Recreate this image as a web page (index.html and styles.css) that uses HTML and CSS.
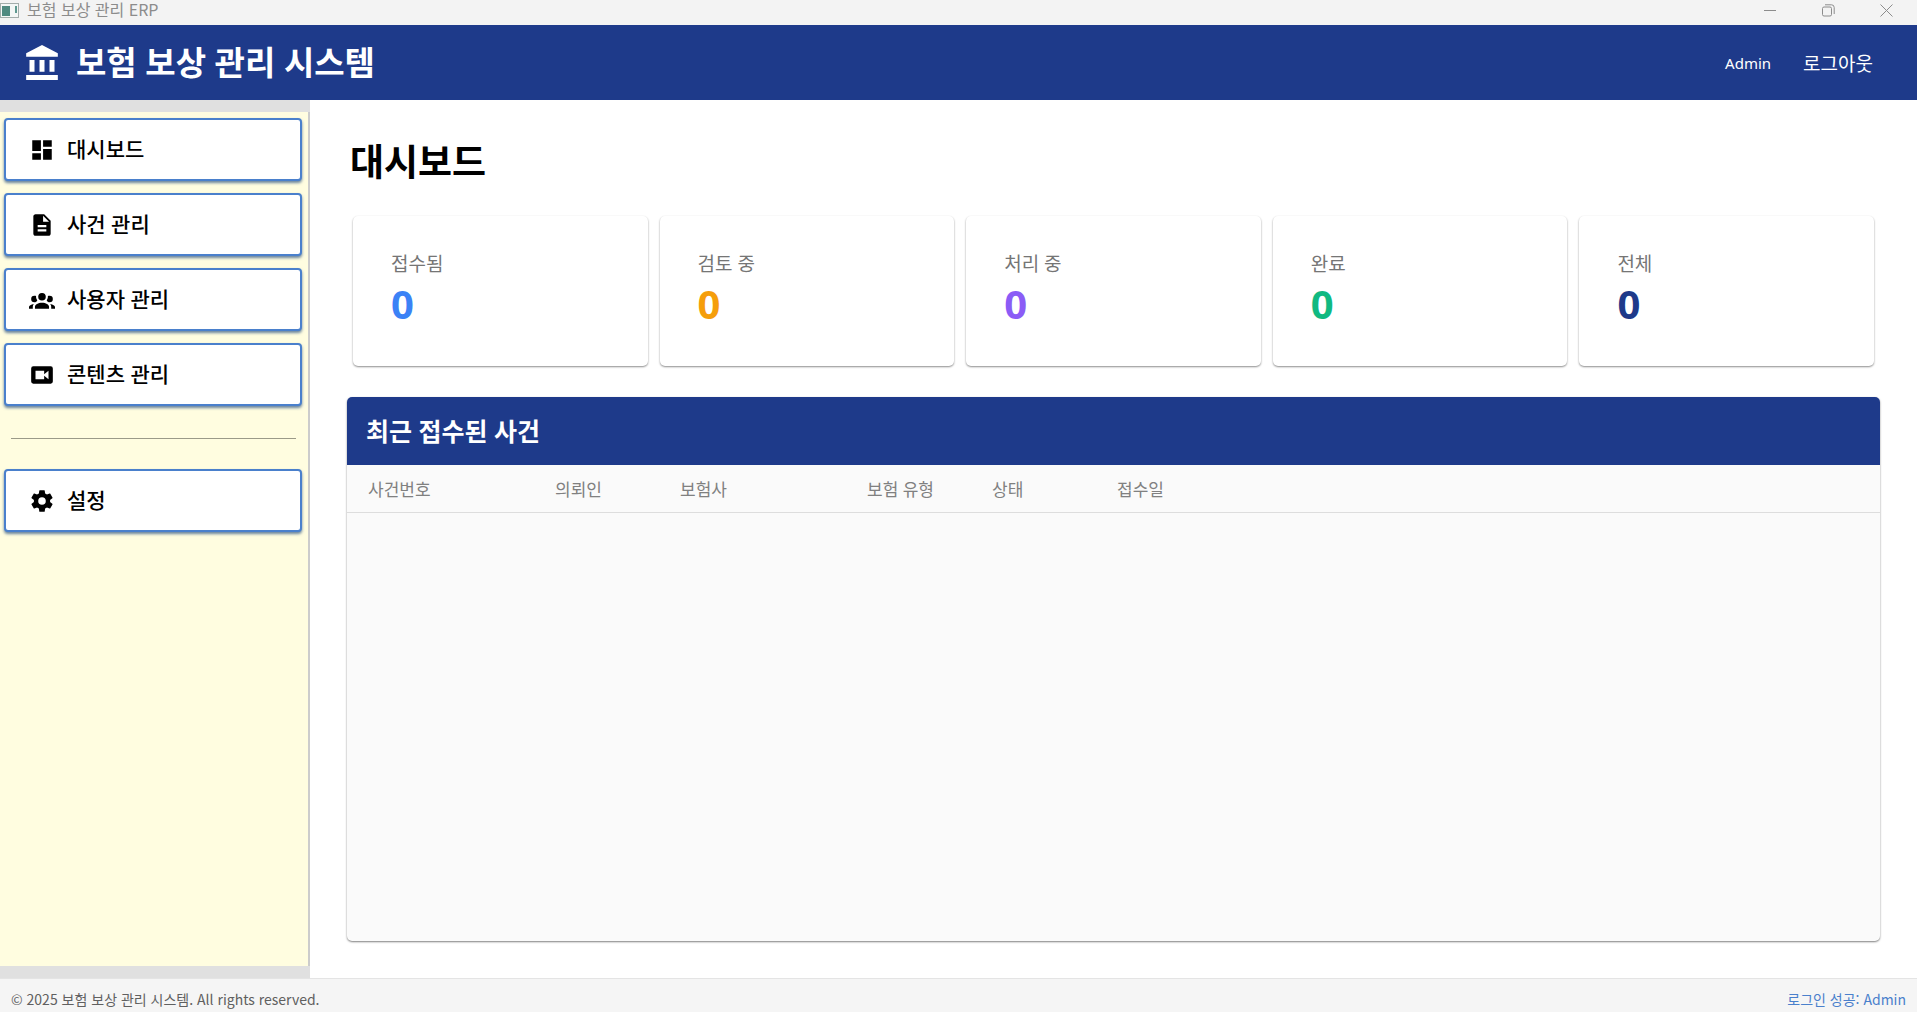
FILE: index.html
```html
<!DOCTYPE html>
<html lang="ko">
<head>
  <meta charset="UTF-8" />
  <meta name="viewport" content="width=device-width, initial-scale=1.0" />
  <title>보험 보상 관리 ERP</title>
  <link rel="stylesheet" href="styles.css">
</head>
<body>

<div class="titlebar">
  <svg class="app-icon" width="19" height="15" viewBox="0 0 19 15">
    <rect x="0.5" y="0.5" width="18" height="14" fill="#f4f7f6" stroke="#a3adab" />
    <rect x="2" y="3" width="8" height="10" fill="#4f8a80" />
    <rect x="15" y="3" width="2" height="7" fill="#5f9990" />
  </svg>
  <span class="titlebar-text">보험 보상 관리 ERP</span>
  <div class="window-buttons">
    <button aria-label="최소화">
      <svg width="13" height="13" viewBox="0 0 13 13"><path d="M0 6.5h12" /></svg>
    </button>
    <button aria-label="이전 크기로 복원">
      <svg width="13" height="13" viewBox="0 0 13 13"><rect x="0.5" y="3" width="9" height="9" rx="1.5" /><path d="M3 .8h6.5a2.7 2.7 0 0 1 2.7 2.7V10" /></svg>
    </button>
    <button aria-label="닫기">
      <svg width="13" height="13" viewBox="0 0 13 13"><path d="M.5.5l12 12M12.5.5l-12 12" /></svg>
    </button>
  </div>
</div>

<header class="header">
  <svg class="logo" viewBox="2 1 19 21" width="32" height="35">
    <path d="M4 10v7h3v-7H4zm6 0v7h3v-7h-3zM2 22h19v-3H2v3zm14-12v7h3v-7h-3zm-4.5-9L2 6v2h19V6l-9.500-5z" />
  </svg>
  <h1>보험 보상 관리 시스템</h1>
  <span class="user-name">Admin</span>
  <button class="logout-btn">로그아웃</button>
</header>

<div class="container">
  <nav class="sidebar">
    <button class="nav-btn">
      <svg viewBox="0 0 24 24"><path d="M3 13h8V3H3v10zm0 8h8v-6H3v6zm10 0h8V11h-8v10zm0-18v6h8V3h-8z" /></svg>
      <span>대시보드</span>
    </button>
    <button class="nav-btn">
      <svg viewBox="0 0 24 24"><path d="M14 2H6c-1.100 0-1.990.900-1.990 2L4 20c0 1.100.890 2 1.990 2H18c1.100 0 2-.900 2-2V8l-6-6zm2 16H8v-2h8v2zm0-4H8v-2h8v2zm-3-5V3.500L18.500 9H13z" /></svg>
      <span>사건 관리</span>
    </button>
    <button class="nav-btn">
      <svg viewBox="0 0 24 24"><path d="M12 5.500A3.500 3.500 0 0 1 15.500 9 3.500 3.500 0 0 1 12 12.500 3.500 3.500 0 0 1 8.500 9 3.500 3.500 0 0 1 12 5.500M5 8c.560 0 1.080.150 1.530.420-.150 1.430.270 2.850 1.130 3.960C7.160 13.340 6.160 14 5 14a3 3 0 0 1-3-3 3 3 0 0 1 3-3m14 0a3 3 0 0 1 3 3 3 3 0 0 1-3 3c-1.160 0-2.160-.660-2.660-1.620a5.540 5.540 0 0 0 1.130-3.960C17.920 8.150 18.440 8 19 8M5.500 18.250c0-2.070 2.910-3.750 6.500-3.750s6.500 1.680 6.500 3.750V20h-13v-1.750M0 20v-1.500c0-1.390 1.890-2.560 4.450-2.900-.590.680-.950 1.620-.950 2.650V20H0m24 0h-3.500v-1.750c0-1.030-.360-1.970-.950-2.650 2.560.340 4.450 1.510 4.450 2.900V20z" /></svg>
      <span>사용자 관리</span>
    </button>
    <button class="nav-btn">
      <svg viewBox="0 0 24 24"><path d="M18 16l-4-3.200V16H6V8h8v3.200L18 8m2-4H4a2 2 0 0 0-2 2v12a2 2 0 0 0 2 2h16a2 2 0 0 0 2-2V6a2 2 0 0 0-2-2z" /></svg>
      <span>콘텐츠 관리</span>
    </button>
    <hr>
    <button class="nav-btn">
      <svg viewBox="0 0 24 24"><path d="M12 15.500A3.500 3.500 0 0 1 8.500 12 3.500 3.500 0 0 1 12 8.500a3.500 3.500 0 0 1 3.500 3.500 3.500 3.500 0 0 1-3.500 3.500m7.430-2.530c.040-.320.070-.640.070-.970s-.030-.660-.070-1l2.110-1.630c.190-.150.240-.420.120-.640l-2-3.460c-.120-.220-.390-.310-.610-.220l-2.490 1c-.520-.390-1.060-.730-1.690-.980l-.370-2.650A.506.506 0 0 0 14 2h-4c-.250 0-.460.180-.500.420l-.370 2.650c-.630.250-1.170.590-1.690.980l-2.490-1c-.220-.090-.490 0-.610.220l-2 3.460c-.130.220-.070.490.120.640L4.570 11c-.040.340-.070.670-.070 1s.030.650.070.970l-2.110 1.660c-.190.150-.250.420-.120.640l2 3.460c.120.220.390.300.610.220l2.490-1.010c.520.400 1.060.740 1.690.990l.370 2.650c.040.240.250.420.500.420h4c.250 0 .460-.180.500-.420l.370-2.650c.630-.260 1.170-.590 1.690-.990l2.490 1.010c.220.080.490 0 .610-.220l2-3.460c.120-.220.070-.490-.120-.640l-2.110-1.660z" /></svg>
      <span>설정</span>
    </button>
  </nav>

  <main class="content">
    <h2>대시보드</h2>

    <div class="stats">
      <div class="card">
        <div class="card-label">접수됨</div>
        <div class="card-value received">0</div>
      </div>
      <div class="card">
        <div class="card-label">검토 중</div>
        <div class="card-value review">0</div>
      </div>
      <div class="card">
        <div class="card-label">처리 중</div>
        <div class="card-value processing">0</div>
      </div>
      <div class="card">
        <div class="card-label">완료</div>
        <div class="card-value done">0</div>
      </div>
      <div class="card">
        <div class="card-label">전체</div>
        <div class="card-value total">0</div>
      </div>
    </div>

    <section class="panel">
      <h3>최근 접수된 사건</h3>
      <table>
        <colgroup>
          <col class="col-wide">
          <col class="col-narrow">
          <col class="col-wide">
          <col class="col-narrow">
          <col class="col-narrow">
          <col>
        </colgroup>
        <thead>
          <tr>
            <th>사건번호</th>
            <th>의뢰인</th>
            <th>보험사</th>
            <th>보험 유형</th>
            <th>상태</th>
            <th>접수일</th>
          </tr>
        </thead>
        <tbody></tbody>
      </table>
    </section>
  </main>
</div>

<footer class="footer">
  <span>© 2025 보험 보상 관리 시스템. All rights reserved.</span>
  <span class="status">로그인 성공: Admin</span>
</footer>

</body>
</html>
```
FILE: styles.css
```css
* {
  box-sizing: border-box;
}

html, body {
  height: 100%;
  margin: 0;
  padding: 0;
}

body {
  display: flex;
  flex-direction: column;
  font-family: "Noto Sans", "Noto Sans CJK KR", sans-serif;
  background: #ffffff;
  color: #000000;
}

button {
  font-family: inherit;
  border: none;
  background: none;
  padding: 0;
  cursor: pointer;
}

h1, h2, h3 {
  margin: 0;
}

/* window title bar */
.titlebar {
  display: flex;
  align-items: center;
  height: 25px;
  padding-bottom: 5px;
  background: #f3f3f3;
  color: #8c8c8c;
  font-family: "Noto Sans CJK KR", sans-serif;
  font-size: 16px;
  line-height: 18px;
}

.titlebar-text {
  flex: 1;
  margin-left: 8px;
  padding-bottom: 2px;
}

.window-buttons {
  display: flex;
  margin-right: 2px;
}

.window-buttons button {
  display: flex;
  align-items: center;
  justify-content: center;
  width: 58px;
  height: 20px;
}

.window-buttons svg {
  fill: none;
  stroke: #8c8c8c;
}

/* app header */
.header {
  display: flex;
  align-items: center;
  height: 75px;
  padding: 0 44px 0 26px;
  background: #1e3a8a;
  color: #ffffff;
}

.logo {
  fill: #ffffff;
}

.header h1 {
  flex: 1;
  margin-left: 18px;
  font-size: 33px;
  line-height: 40px;
}

.user-name {
  font-size: 15px;
}

.logout-btn {
  margin-left: 32px;
  color: #ffffff;
  font-size: 19px;
}

.container {
  display: flex;
  flex: 1;
  min-height: 0;
}

/* sidebar */
.sidebar {
  display: flex;
  flex-direction: column;
  gap: 12px;
  width: 310px;
  padding: 6px 6px 6px 4px;
  background: #fffde0;
  border: solid #e0e0e0;
  border-width: 12px 0;
  box-shadow: inset -2px 0 #cccccc;
}

.nav-btn {
  display: flex;
  align-items: center;
  gap: 12px;
  width: 298px;
  height: 63px;
  padding-left: 23px;
  background: #ffffff;
  border: 2px solid #4a80cc;
  border-radius: 4px;
  box-shadow: 0 2px 3px rgba(40, 80, 130, 0.7);
  color: #000000;
  font-size: 21px;
  font-weight: 500;
}

.nav-btn svg {
  width: 26px;
  height: 26px;
}

.nav-btn span {
  padding-bottom: 3px;
}

.sidebar hr {
  width: 285px;
  height: 1px;
  margin: 20px 0 18px 7px;
  border: none;
  background: #9b9a88;
}

/* main area */
.content {
  display: flex;
  flex: 1;
  flex-direction: column;
  min-width: 0;
  padding: 37px;
}

.content h2 {
  margin-left: 3px;
  font-size: 37px;
  line-height: 50px;
}

.stats {
  display: grid;
  grid-template-columns: repeat(5, 1fr);
  gap: 12px;
  margin: 29px 6px 31px;
}

.card {
  height: 150px;
  padding: 34px 38px;
  border-radius: 5px;
  background: #ffffff;
  box-shadow: 0 1px 2px rgba(0, 0, 0, 0.45);
}

.card-label {
  color: #757575;
  font-size: 19px;
  line-height: 28px;
}

.card-value {
  font-size: 40px;
  font-weight: 700;
  line-height: 52px;
}

.received {
  color: #3b82f6;
}

.review {
  color: #f59e0b;
}

.processing {
  color: #8b5cf6;
}

.done {
  color: #10b981;
}

.total {
  color: #1e3a8a;
}

/* recent cases */
.panel {
  flex: 1;
  overflow: hidden;
  border-radius: 5px;
  background: #fafafa;
  box-shadow: 0 1px 2px rgba(0, 0, 0, 0.5);
}

.panel h3 {
  height: 68px;
  padding-left: 19px;
  background: #1e3a8a;
  color: #ffffff;
  font-size: 25px;
  line-height: 68px;
}

.panel table {
  width: 100%;
  table-layout: fixed;
  border-collapse: collapse;
}

.col-wide {
  width: 187px;
}

.col-narrow {
  width: 125px;
}

.panel th {
  height: 47px;
  padding: 4px 0 0 21px;
  border-bottom: 1px solid #dddddd;
  color: #808080;
  font-size: 17px;
  font-weight: 400;
  line-height: 24px;
  text-align: left;
  white-space: nowrap;
}

/* footer */
.footer {
  display: flex;
  align-items: center;
  justify-content: space-between;
  height: 34px;
  padding: 6px 11px 0;
  border-top: 1px solid #e4e4e4;
  background: #f5f5f5;
  color: #606060;
  font-family: "Noto Sans CJK KR", sans-serif;
  font-size: 14px;
  line-height: 24px;
}

.status {
  color: #4a80cc;
}
```
